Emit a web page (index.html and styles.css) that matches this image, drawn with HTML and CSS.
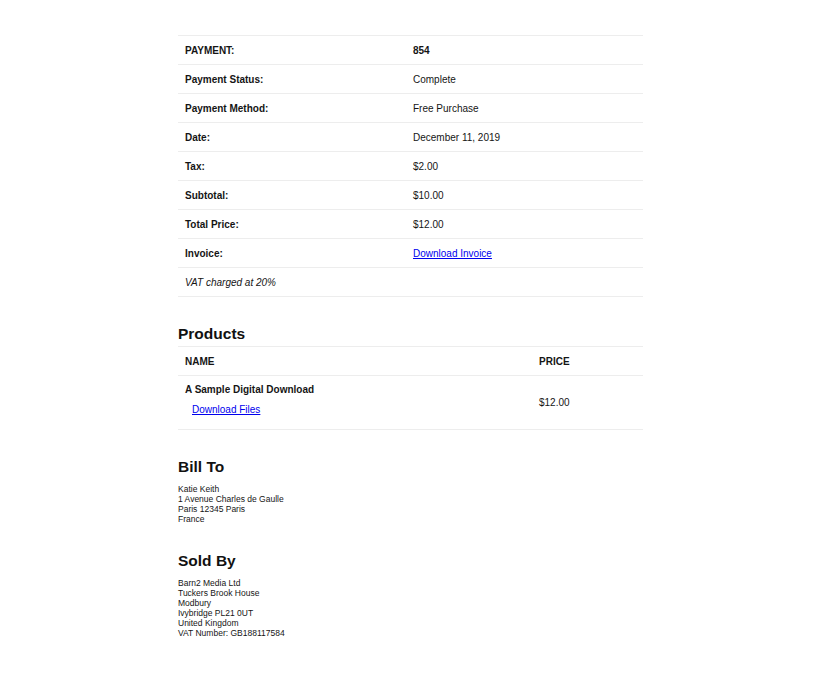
FILE: index.html
```html
<!DOCTYPE html>
<html lang="en">
<head>
<meta charset="utf-8">
<title>Payment Receipt</title>
<link rel="stylesheet" href="styles.css">
</head>
<body>
<div class="receipt">
  <table class="info">
    <tbody>
      <tr><td class="label upper">PAYMENT:</td><td class="value strong">854</td></tr>
      <tr><td class="label">Payment Status:</td><td class="value">Complete</td></tr>
      <tr><td class="label">Payment Method:</td><td class="value">Free Purchase</td></tr>
      <tr><td class="label">Date:</td><td class="value">December 11, 2019</td></tr>
      <tr><td class="label">Tax:</td><td class="value">$2.00</td></tr>
      <tr><td class="label">Subtotal:</td><td class="value">$10.00</td></tr>
      <tr><td class="label">Total Price:</td><td class="value">$12.00</td></tr>
      <tr><td class="label">Invoice:</td><td class="value"><a href="#">Download Invoice</a></td></tr>
      <tr><td class="note" colspan="2">VAT charged at 20%</td></tr>
    </tbody>
  </table>

  <h3 class="heading">Products</h3>
  <table class="products">
    <thead>
      <tr><th class="col-name">NAME</th><th class="col-price">PRICE</th></tr>
    </thead>
    <tbody>
      <tr>
        <td class="product">
          <div class="product-name">A Sample Digital Download</div>
          <div class="product-files"><a href="#">Download Files</a></div>
        </td>
        <td class="price">$12.00</td>
      </tr>
    </tbody>
  </table>

  <h3 class="heading">Bill To</h3>
  <div class="address">
    <div>Katie Keith</div>
    <div>1 Avenue Charles de Gaulle</div>
    <div>Paris 12345 Paris</div>
    <div>France</div>
  </div>

  <h3 class="heading">Sold By</h3>
  <div class="address">
    <div>Barn2 Media Ltd</div>
    <div>Tuckers Brook House</div>
    <div>Modbury</div>
    <div>Ivybridge PL21 0UT</div>
    <div>United Kingdom</div>
    <div>VAT Number: GB188117584</div>
  </div>
</div>
</body>
</html>
```

FILE: styles.css
```css
html, body {
  margin: 0;
  padding: 0;
  background: #ffffff;
}

body {
  font-family: "Liberation Sans", Arial, Helvetica, sans-serif;
  color: #151515;
  font-size: 10px;
  padding-left: 1px;
}

.receipt {
  width: 465px;
  margin: 0 auto;
  padding-top: 35px;
  padding-bottom: 30px;
}

table {
  width: 100%;
  border-collapse: collapse;
  border-spacing: 0;
  border-top: 1px solid #ededed;
}

td, th {
  border-bottom: 1px solid #ededed;
  padding: 9px 7px 7px;
  line-height: 12px;
  font-size: 10px;
  text-align: left;
  vertical-align: middle;
}

.info .label {
  width: 214px;
  font-weight: bold;
}

.info .strong {
  font-weight: bold;
}

.info .note {
  font-style: italic;
}

a {
  color: #0000ee;
  text-decoration: underline;
}

.heading {
  margin: 28px 0 3px;
  font-size: 15.5px;
  line-height: 18px;
  font-weight: bold;
  color: #111111;
}

.products th {
  font-weight: bold;
}

.products .col-name {
  width: 340px;
}

.products .product {
  padding-top: 8px;
  padding-bottom: 13px;
}

.products .price {
  padding-top: 8px;
  padding-bottom: 8px;
}

.product-name {
  font-weight: bold;
}

.product-files {
  margin-top: 8px;
  padding-left: 7px;
}

.address {
  font-size: 8.5px;
  line-height: 10px;
  margin-top: 8px;
}

.address + .heading {
  margin-top: 28px;
}
```
